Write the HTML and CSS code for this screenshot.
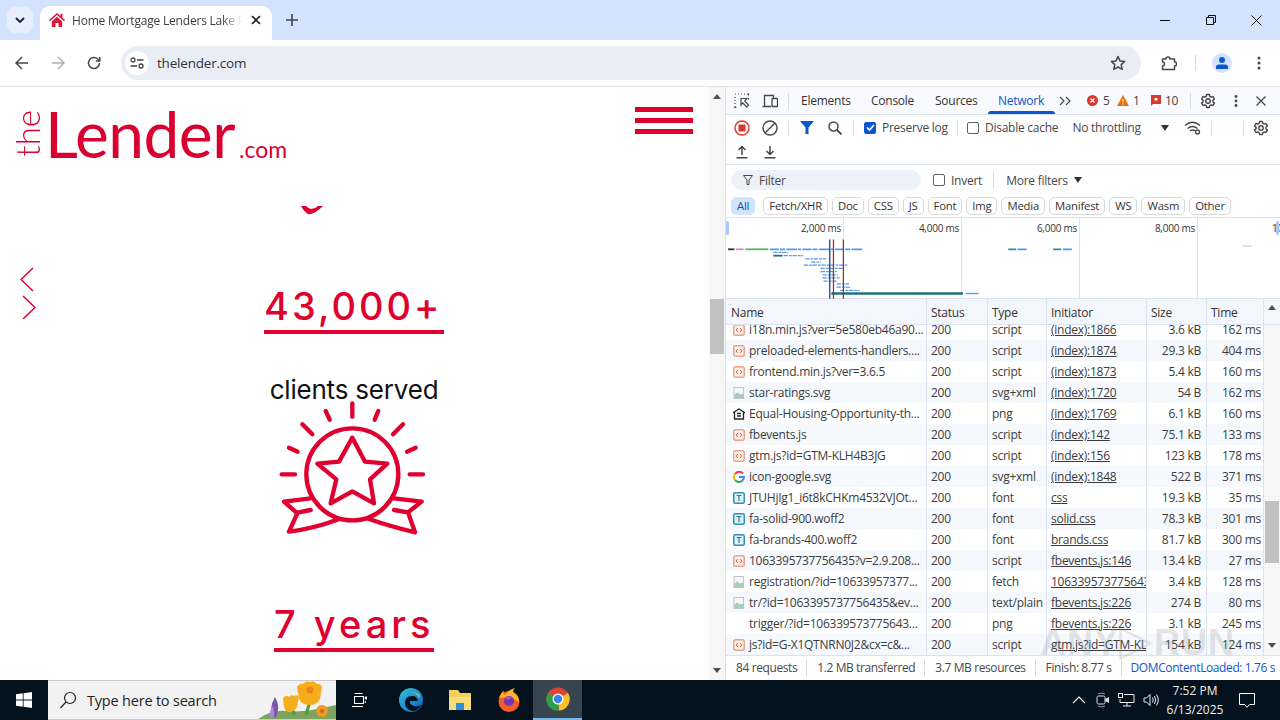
FILE: index.html
```html
<!DOCTYPE html>
<html lang="en">
<head>
<meta charset="utf-8">
<title>Home Mortgage Lenders</title>
<link rel="stylesheet" href="styles.css">
</head>
<body>
<svg class="defs" width="0" height="0" aria-hidden="true">
  <symbol id="i-script" viewBox="0 0 12 12"><rect x=".75" y=".75" width="10.5" height="10.5" rx="2" fill="#fdeee8" stroke="#e8a58c" stroke-width="1.5"/><path d="M4.8 4 3.2 6l1.600 2M7.200 4l1.600 2-1.600 2" fill="none" stroke="#d9623a" stroke-width="1"/></symbol>
  <symbol id="i-img" viewBox="0 0 12 13"><rect x=".5" y=".5" width="10.5" height="12" fill="#f4f6f9" stroke="#b9c2cc"/><path d="M1 12 1 8l3-2 3 2 4-1v5z" fill="#a9cdb4"/></symbol>
  <symbol id="i-font" viewBox="0 0 12 12"><rect x=".75" y=".75" width="10.5" height="10.5" rx="1.5" fill="#e3f1f8" stroke="#2f8fb8" stroke-width="1.5"/><path d="M3.500 3.500h5M6 3.500v5.500" fill="none" stroke="#1f7fa8" stroke-width="1.200"/></symbol>
  <symbol id="i-gear" viewBox="0 0 16 16"><path d="M6.600 1.500h2.800l.4 1.900 1.300.7 1.900-.6 1.400 2.400-1.500 1.300v1.600l1.500 1.300-1.400 2.400-1.900-.6-1.300.7-.4 1.900H6.600l-.4-1.900-1.300-.7-1.900.6-1.400-2.400 1.500-1.300V7.200L1.600 5.900 3 3.500l1.900.6 1.300-.7z" fill="none" stroke="#474747" stroke-width="1.400" stroke-linejoin="round"/><circle cx="8" cy="8" r="2.200" fill="none" stroke="#474747" stroke-width="1.400"/></symbol>
</svg>

<header class="tabstrip">
  <button class="tabsearch"><svg width="10" height="6" viewBox="0 0 10 6"><path d="M1 1l4 4 4-4" fill="none" stroke="#1f1f1f" stroke-width="1.800"/></svg></button>
  <div class="tab">
    <svg class="favicon" width="16" height="14" viewBox="0 0 16 14"><path d="M8 0 0 7l1 1.200L8 2l7 6.200L16 7l-2.500-2.200V1h-2v2zM2.800 8.500V14h3.700v-4h3v4h3.700V8.500L8 3.800z" fill="#d9183b"/></svg>
    <span class="tabtitle">Home Mortgage Lenders Lake Forest</span>
    <svg class="tabclose" width="10" height="10" viewBox="0 0 10 10"><path d="M1 1l8 8M9 1 1 9" stroke="#1f1f1f" stroke-width="1.600"/></svg>
  </div>
  <svg class="newtab" width="12" height="12" viewBox="0 0 12 12"><path d="M6 0v12M0 6h12" stroke="#444" stroke-width="1.600"/></svg>
  <div class="winctl">
    <svg width="10" height="10" viewBox="0 0 10 10"><path d="M0 5.500h10" stroke="#111" stroke-width="1"/></svg>
    <svg width="10" height="10" viewBox="0 0 10 10"><path d="M.5 2.500h7v7h-7zM2.500 2.500v-2h7v7h-2" fill="none" stroke="#111"/></svg>
    <svg width="11" height="11" viewBox="0 0 11 11"><path d="M.5.500l10 10M10.500.500l-10 10" stroke="#111"/></svg>
  </div>
</header>

<nav class="toolbar">
  <svg class="nav-i" width="14" height="14" viewBox="0 0 14 14"><path d="M13 7H1.500M7 1 1 7l6 6" fill="none" stroke="#474747" stroke-width="1.500"/></svg>
  <svg class="nav-i" width="14" height="14" viewBox="0 0 14 14"><path d="M1 7h11.500M7 1l6 6-6 6" fill="none" stroke="#b0b0b0" stroke-width="1.500"/></svg>
  <svg class="nav-i" width="14" height="14" viewBox="0 0 14 14"><path d="M12.500 7A5.500 5.500 0 1 1 10.800 3L12.500 4.500M12.800 1v4h-4" fill="none" stroke="#474747" stroke-width="1.500"/></svg>
  <div class="omnibox">
    <span class="siteinfo"><svg width="14" height="12" viewBox="0 0 14 12"><circle cx="3" cy="3" r="2" fill="none" stroke="#444" stroke-width="1.300"/><path d="M7 3h6.500M.5 9H7" stroke="#444" stroke-width="1.300"/><circle cx="11" cy="9" r="2" fill="none" stroke="#444" stroke-width="1.300"/></svg></span>
    <span class="url">thelender.com</span>
    <svg class="star" width="16" height="16" viewBox="0 0 16 16"><path d="M8 1.500l2 4.400 4.700.5-3.500 3.200 1 4.700L8 12l-4.200 2.300 1-4.700L1.300 6.400 6 5.900z" fill="none" stroke="#474747" stroke-width="1.500" stroke-linejoin="round"/></svg>
  </div>
  <svg class="ext" width="16" height="16" viewBox="0 0 16 16"><path d="M1 4h3.500a2 2 0 0 1 4 0H13v3a2 2 0 0 1 0 4v3.500H1V11a2 2 0 0 0 0-4z" transform="translate(.5 0)" fill="none" stroke="#474747" stroke-width="1.500" stroke-linejoin="round"/></svg>
  <span class="vsep"></span>
  <span class="avatar"><svg width="14" height="12" viewBox="0 0 14 12"><circle cx="7" cy="3" r="3" fill="#0b57d0"/><path d="M1 12V10q0-2.500 3-2.500h6q3 0 3 2.500v2z" fill="#0b57d0"/></svg></span>
  <svg class="dots" width="4" height="14" viewBox="0 0 4 14"><circle cx="2" cy="2" r="1.500" fill="#474747"/><circle cx="2" cy="7" r="1.500" fill="#474747"/><circle cx="2" cy="12" r="1.500" fill="#474747"/></svg>
</nav>

<main class="workspace">
  <section class="page">
    <div class="site-head">
      <div class="logo">
        <span class="logo-the">the</span>
        <span class="logo-name">Lender</span>
        <span class="logo-com">.com</span>
      </div>
      <div class="burger"><span></span><span></span><span></span></div>
    </div>
    <svg class="tick" width="22" height="9" viewBox="0 0 22 9"><path d="M0 0h5q3 3 5 3 4 0 7-3h5q-7 7-14 8.500Q3 6 0 0z" fill="#df0030"/></svg>
    <div class="stats">
      <div class="stat-num">43,000+</div>
      <div class="stat-label">clients served</div>
      <svg class="medal" width="190" height="150" viewBox="0 0 570 450" fill="none" stroke="#df0030" stroke-width="13" stroke-linecap="round" stroke-linejoin="round">
        <path d="M280 25v40M200 48l12 26M130 88l30 30M90 158l26 12M68 238h40M358 48l-11 26M432 88l-30 30M470 158l-26 12M492 238h-40"/>
        <circle cx="280" cy="238" r="138"/>
        <path d="M280 128l38 72 67 6-52 47 12 72-65-36-65 36 17-72-57-47 65-6z"/>
        <path d="M155 310l-80 10 40 35-25 55q75-10 145-36M118 352l37-7M405 310l83 10-41 32 21 60q-75-18-138-40M405 345l42 7"/>
      </svg>
      <div class="stat-num stat-years">7 years</div>
    </div>
    <svg class="arrows" width="16" height="52" viewBox="0 0 16 52"><path d="M13 1 1 12.500 13 24M3 29l12 11.500L3 52" fill="none" stroke="#df0030" stroke-width="1.500"/></svg>
  </section>

  <aside class="pagebar">
    <i class="arr-up"></i>
    <span class="pagethumb"></span>
    <i class="arr-down"></i>
  </aside>

  <section class="devtools">
    <div class="dt-tabs">
      <svg class="ic first" width="16" height="16" viewBox="0 0 16 16"><path d="M1 1h1M4 1h1M7 1h1M10 1h1M13 1h1.500v1.500M1 4v1M1 7v1M1 10v1M1 13v1.500h1.500M14.500 5v1.500" stroke="#474747" stroke-width="1.200" fill="none"/><path d="M7 5.500h6l-2.300 2.400L14.500 12l-1.800 2-4-4.200L7 12z" fill="none" stroke="#474747" stroke-width="1.200"/></svg>
      <svg class="ic second" width="16" height="14" viewBox="0 0 16 14"><path d="M9 12.500H.5M2.500 12V1.500h9V4" fill="none" stroke="#474747" stroke-width="1.300"/><rect x="10" y="4.500" width="5.500" height="8" rx=".5" fill="none" stroke="#474747" stroke-width="1.300"/></svg>
      <span class="dt-sep"></span>
      <span class="dt-tab t1">Elements</span>
      <span class="dt-tab t2">Console</span>
      <span class="dt-tab t3">Sources</span>
      <span class="dt-tab dt-active">Network</span>
      <svg class="chev" width="12" height="10" viewBox="0 0 12 10"><path d="M1 1l4 4-4 4M7 1l4 4-4 4" fill="none" stroke="#474747" stroke-width="1.200"/></svg>
      <span class="badge b-err"><svg width="11" height="11" viewBox="0 0 11 11"><circle cx="5.500" cy="5.500" r="5.500" fill="#dc362e"/><path d="M3.500 3.500l4 4M7.500 3.500l-4 4" stroke="#fff" stroke-width="1.200"/></svg>5</span>
      <span class="badge b-warn"><svg width="12" height="11" viewBox="0 0 12 11"><path d="M6 0l6 11H0z" fill="#e8710a"/><path d="M6 4v3.500M6 8.500v1" stroke="#fff"/></svg>1</span>
      <span class="badge b-flag"><svg width="10" height="11" viewBox="0 0 10 11"><path d="M0 0h10v9H0z" fill="#dc362e"/><path d="M0 9v2l2-2z" fill="#dc362e"/><path d="M3.500 3h3v2.500h-3z" fill="#fff"/></svg>10</span>
      <span class="dt-sep s2"></span>
      <svg class="ic g1" width="16" height="16"><use href="#i-gear"/></svg>
      <svg class="ic g2" width="4" height="12" viewBox="0 0 4 12"><circle cx="2" cy="1.500" r="1.400" fill="#474747"/><circle cx="2" cy="6" r="1.400" fill="#474747"/><circle cx="2" cy="10.500" r="1.400" fill="#474747"/></svg>
      <svg class="ic g3" width="10" height="10" viewBox="0 0 10 10"><path d="M.5.500l9 9M9.500.500l-9 9" stroke="#474747" stroke-width="1.300"/></svg>
    </div>

    <div class="dt-bar">
      <span class="btn"><svg width="16" height="16" viewBox="0 0 16 16"><circle cx="8" cy="8" r="7" fill="none" stroke="#dc362e" stroke-width="1.400"/><rect x="4.500" y="4.500" width="7" height="7" rx="1" fill="#dc362e"/></svg></span>
      <span class="btn"><svg width="16" height="16" viewBox="0 0 16 16"><circle cx="8" cy="8" r="7" fill="none" stroke="#474747" stroke-width="1.400"/><path d="M3 13 13 3" stroke="#474747" stroke-width="1.400"/></svg></span>
      <span class="bar-sep"></span>
      <span class="btn"><svg width="14" height="13" viewBox="0 0 14 13"><path d="M0 0h14L8.500 6.500V13h-3V6.500z" fill="#0b57d0"/></svg></span>
      <span class="btn"><svg width="14" height="14" viewBox="0 0 14 14"><circle cx="5.500" cy="5.500" r="4.500" fill="none" stroke="#474747" stroke-width="1.500"/><path d="M9 9l4.500 4.500" stroke="#474747" stroke-width="1.800"/></svg></span>
      <span class="bar-sep"></span>
      <span class="check on"><svg width="11" height="11" viewBox="0 0 11 11"><path d="M2 5.500l2.500 2.500L9 3" fill="none" stroke="#fff" stroke-width="1.600"/></svg></span>
      <span class="lbl pres">Preserve log</span>
      <span class="bar-sep s3"></span>
      <span class="check"></span>
      <span class="lbl">Disable cache</span>
      <span class="lbl throttle">No throttling</span>
      <i class="caret"></i>
      <svg class="wifi" width="18" height="14" viewBox="0 0 18 14"><path d="M1 4.500q7.500-6.500 15 0M3.500 7.500q5-4 10 0M6 10q2.500-2 5 0" fill="none" stroke="#474747" stroke-width="1.300"/><circle cx="13.500" cy="11" r="2" fill="none" stroke="#474747" stroke-width="1.300"/></svg>
      <span class="bar-sep s4"></span>
      <span class="bar-sep s5"></span>
      <svg class="gear-r" width="16" height="16"><use href="#i-gear"/></svg>
    </div>

    <div class="dt-bar2">
      <span class="btn"><svg width="14" height="14" viewBox="0 0 14 14"><path d="M7 10V1.500M3.500 5 7 1.500 10.500 5M1.500 12.800h11" fill="none" stroke="#474747" stroke-width="1.500"/></svg></span>
      <span class="btn"><svg width="14" height="14" viewBox="0 0 14 14"><path d="M7 1v8.500M3.500 6 7 9.500 10.500 6M1.500 12.800h11" fill="none" stroke="#474747" stroke-width="1.500"/></svg></span>
    </div>

    <div class="dt-filter">
      <div class="filter-input"><svg width="10" height="10" viewBox="0 0 10 10"><path d="M.5.500h9L6 5v4.500H4V5z" fill="none" stroke="#474747" stroke-width="1"/></svg><span>Filter</span></div>
      <span class="check c-inv"></span>
      <span class="lbl">Invert</span>
      <span class="bar-sep s6"></span>
      <span class="lbl">More filters</span>
      <i class="caret c2"></i>
    </div>

    <div class="dt-chips">
      <span class="chip sel">All</span>
      <span class="chip">Fetch/XHR</span>
      <span class="chip">Doc</span>
      <span class="chip">CSS</span>
      <span class="chip">JS</span>
      <span class="chip">Font</span>
      <span class="chip">Img</span>
      <span class="chip">Media</span>
      <span class="chip">Manifest</span>
      <span class="chip">WS</span>
      <span class="chip">Wasm</span>
      <span class="chip">Other</span>
    </div>

    <div class="overview">
      <span class="handle h-l"></span>
      <span class="handle h-r"></span>
      <span class="tick-lbl">2,000 ms</span>
      <span class="tick-lbl">4,000 ms</span>
      <span class="tick-lbl">6,000 ms</span>
      <span class="tick-lbl">8,000 ms</span>
      <span class="tick-lbl last">10,000 ms</span>
      <svg class="waterfall" width="554" height="81" viewBox="2.800 8.500 1565 229" fill="none">
        <g stroke-width="5">
          <path d="M8 97h18" stroke="#27313a"/><path d="M30 97h22" stroke="#d884cc"/><path d="M57 97h65" stroke="#54b45c"/>
          <path d="M126 97h264" stroke="#5b97e6" stroke-dasharray="26 3 14 4 30 3 9 3"/>
          <path d="M800 97h22M927 97h23" stroke="#24968e"/><path d="M826 97h26M955 97h25" stroke="#5b97e6"/>
          <path d="M1462 88h26" stroke="#ddd"/>
          <path d="M136 115h26" stroke="#1e6f70"/>
        </g>
        <g stroke="#5b97e6" stroke-width="3.500" stroke-dasharray="12 3 8 2">
          <path d="M136 106h42M165 115h55M226 124h59M243 133h27M222 142h123M270 151h65M270 160h45M275 169h43M275 178h50M278 187h40M315 195h35M315 204h40M325 213h55"/>
        </g>
        <path d="M300 222h372" stroke="#1e7078" stroke-width="7"/>
        <path d="M680 222h36" stroke="#5b97e6" stroke-width="4"/>
        <path d="M295.500 69v168" stroke="#0b3d91" stroke-width="3.500"/>
        <path d="M306 69v168M334 69v168" stroke="#b3261e" stroke-width="3.500"/>
      </svg>
    </div>

    <div class="net-head">
      <span>Name</span><span>Status</span><span>Type</span><span>Initiator</span><span>Size</span><span>Time</span>
      <i class="arr-up small"></i>
    </div>

    <div class="net-body">
      <div class="rows">
        <div class="row"><span class="name"><svg><use href="#i-script"/></svg>i18n.min.js?ver=5e580eb46a90...</span><span>200</span><span>script</span><span class="init">(index):1866</span><span class="r">3.6 kB</span><span class="r">162 ms</span></div>
        <div class="row"><span class="name"><svg><use href="#i-script"/></svg>preloaded-elements-handlers....</span><span>200</span><span>script</span><span class="init">(index):1874</span><span class="r">29.3 kB</span><span class="r">404 ms</span></div>
        <div class="row"><span class="name"><svg><use href="#i-script"/></svg>frontend.min.js?ver=3.6.5</span><span>200</span><span>script</span><span class="init">(index):1873</span><span class="r">5.4 kB</span><span class="r">160 ms</span></div>
        <div class="row"><span class="name"><svg><use href="#i-img"/></svg>star-ratings.svg</span><span>200</span><span>svg+xml</span><span class="init">(index):1720</span><span class="r">54 B</span><span class="r">162 ms</span></div>
        <div class="row"><span class="name"><svg viewBox="0 0 12 12"><path d="M6 1 .5 4.500h1V11h9V4.500h1z" fill="none" stroke="#222" stroke-width="1.300"/><path d="M4 5.500h4M4 8h4" stroke="#222" stroke-width="1.300"/></svg>Equal-Housing-Opportunity-th...</span><span>200</span><span>png</span><span class="init">(index):1769</span><span class="r">6.1 kB</span><span class="r">160 ms</span></div>
        <div class="row"><span class="name"><svg><use href="#i-script"/></svg>fbevents.js</span><span>200</span><span>script</span><span class="init">(index):142</span><span class="r">75.1 kB</span><span class="r">133 ms</span></div>
        <div class="row"><span class="name"><svg><use href="#i-script"/></svg>gtm.js?id=GTM-KLH4B3JG</span><span>200</span><span>script</span><span class="init">(index):156</span><span class="r">123 kB</span><span class="r">178 ms</span></div>
        <div class="row"><span class="name"><svg viewBox="0 0 12 12" fill="none" stroke-width="2"><path d="M10 2.500A5 5 0 0 0 2 3" stroke="#ea4335"/><path d="M2 3a5 5 0 0 0 0 6" stroke="#fbbc05"/><path d="M2 9a5 5 0 0 0 7.500.500" stroke="#34a853"/><path d="M9.500 9.500A5 5 0 0 0 11 6H6" stroke="#4285f4"/></svg>icon-google.svg</span><span>200</span><span>svg+xml</span><span class="init">(index):1848</span><span class="r">522 B</span><span class="r">371 ms</span></div>
        <div class="row"><span class="name"><svg><use href="#i-font"/></svg>JTUHjIg1_i6t8kCHKm4532VJOt...</span><span>200</span><span>font</span><span class="init">css</span><span class="r">19.3 kB</span><span class="r">35 ms</span></div>
        <div class="row"><span class="name"><svg><use href="#i-font"/></svg>fa-solid-900.woff2</span><span>200</span><span>font</span><span class="init">solid.css</span><span class="r">78.3 kB</span><span class="r">301 ms</span></div>
        <div class="row"><span class="name"><svg><use href="#i-font"/></svg>fa-brands-400.woff2</span><span>200</span><span>font</span><span class="init">brands.css</span><span class="r">81.7 kB</span><span class="r">300 ms</span></div>
        <div class="row"><span class="name"><svg><use href="#i-script"/></svg>1063395737756435?v=2.9.208...</span><span>200</span><span>script</span><span class="init">fbevents.js:146</span><span class="r">13.4 kB</span><span class="r">27 ms</span></div>
        <div class="row"><span class="name"><svg><use href="#i-img"/></svg>registration/?id=10633957377...</span><span>200</span><span>fetch</span><span class="init">1063395737756435</span><span class="r">3.4 kB</span><span class="r">128 ms</span></div>
        <div class="row"><span class="name"><svg><use href="#i-img"/></svg>tr/?id=1063395737756435&amp;ev...</span><span>200</span><span>text/plain</span><span class="init">fbevents.js:226</span><span class="r">274 B</span><span class="r">80 ms</span></div>
        <div class="row"><span class="name"><svg></svg>trigger/?id=106339573775643...</span><span>200</span><span>png</span><span class="init">fbevents.js:226</span><span class="r">3.1 kB</span><span class="r">245 ms</span></div>
        <div class="row"><span class="name"><svg><use href="#i-script"/></svg>js?id=G-X1QTNRN0J2&amp;cx=c&amp;...</span><span>200</span><span>script</span><span class="init">gtm.js?id=GTM-KLH4B3JG</span><span class="r">154 kB</span><span class="r">124 ms</span></div>
      </div>
      <div class="net-scroll"><i class="arr-down small"></i><span class="net-thumb"></span></div>
    </div>

    <div class="net-foot">
      <span>84 requests</span><span>1.2 MB transferred</span><span>3.7 MB resources</span><span>Finish: 8.77 s</span><span class="dcl">DOMContentLoaded: 1.76 s</span>
    </div>
    <div class="watermark">ANY<b>▷</b>RUN</div>
  </section>
</main>

<footer class="taskbar">
  <svg class="start" width="16" height="16" viewBox="0 0 16 16"><path d="M0 2.300 6.800 1.300v6.300H0zM7.600 1.200 16 0v7.600H7.600zM0 8.400h6.800v6.300L0 13.700zM7.600 8.400H16V16l-8.400-1.200z" fill="#fff"/></svg>
  <div class="search">
    <svg width="18" height="18" viewBox="0 0 18 18"><circle cx="11" cy="7" r="5.500" fill="none" stroke="#222" stroke-width="1.200"/><path d="M7 11 1.500 17" stroke="#222" stroke-width="1.200"/></svg>
    <span>Type here to search</span>
    <svg class="flowers" width="78" height="38" viewBox="0 0 78 38">
      <path d="M0 38q14-10 30-8 16 2 48-6v14z" fill="#7da35f"/>
      <path d="M37 34 33 26M48 34l4-14" stroke="#4f9a3c" stroke-width="3"/>
      <path d="M16 36q-6-8 1-20 6 10 1 20z" fill="#7a58a8"/><path d="M12 36q-1-6 3-11 2 5 1 11z" fill="#a58ad0"/>
      <path d="M25 17q3-4 6-1 2-3 5-1 3-2 5 1l-2 10q-3 5-7 5-5 0-6-5z" fill="#f5b11d"/>
      <path d="M39 6q3-5 6-3 3-4 7-2 4-2 7 2 3-1 5 3l-2 12q-3 6-10 6-8 0-11-6z" fill="#f6ad1c"/>
      <circle cx="52" cy="9" r="3.500" fill="#e8861b"/>
      <circle cx="64" cy="30" r="6" fill="#ee9a24"/><circle cx="64" cy="30" r="2" fill="#c9661a"/>
    </svg>
  </div>
  <svg class="taskview" width="16" height="16" viewBox="0 0 16 16"><path d="M3.500 1.500h8M3.500 4.500h9v7h-9zM1 14.500h11" fill="none" stroke="#fff" stroke-width="1.100"/><path d="M14.300 5h1.700v2h-1.700zM14.300 9v2" stroke="#fff" fill="#fff"/></svg>
  <span class="appicon"><svg width="24" height="24" viewBox="0 0 24 24"><defs><linearGradient id="edge" x1="0" y1="0" x2="1" y2="1"><stop offset="0" stop-color="#36c3d0"/><stop offset=".6" stop-color="#1d84d6"/><stop offset="1" stop-color="#0e5fa8"/></linearGradient></defs><circle cx="12" cy="12" r="12" fill="url(#edge)"/><path d="M6 15q0-7 7-7 5 0 6 5h-8q-1 4 4 5 3 1 7-1-3 6-9 6-7-2-7-8z" fill="#03121f"/><path d="M20 10q-3-6-8-5 6-2 9 3z" fill="#73d96c"/></svg></span>
  <span class="appicon"><svg width="24" height="22" viewBox="0 0 24 22"><path d="M1 1h9l2 3h11v17H1z" fill="#f4cf5b"/><path d="M1 8h22v13H1z" fill="#f9dd7a"/><rect x="8" y="14" width="8" height="7" fill="#2a8fd8"/></svg></span>
  <span class="appicon"><svg width="24" height="24" viewBox="0 0 24 24"><circle cx="12" cy="13.500" r="10.500" fill="#f25c2b"/><path d="M2 10q2-6 5-7-1 3 1 4 3-5 10-7-3 3-1 5 5 3 5 9L12 9z" fill="#ffb526"/><circle cx="12" cy="13" r="5" fill="#6d38b8"/><path d="M8 10q4-3 7 0-3 0-4 2z" fill="#d74db0"/></svg></span>
  <span class="appicon running"><svg width="24" height="24" viewBox="0 0 24 24"><circle cx="12" cy="12" r="11.500" fill="#db4437"/><path d="M12 12 22 6a11.500 11.500 0 0 1-9 17.500z" fill="#fbc02d"/><path d="M12 12 13 23.500A11.500 11.500 0 0 1 2 6z" fill="#2f9e44"/><circle cx="12" cy="12" r="5.500" fill="#fff"/><circle cx="12" cy="12" r="4.200" fill="#3b82f0"/></svg></span>
  <div class="tray">
    <svg class="caret-up" width="14" height="8" viewBox="0 0 14 8"><path d="M1 7l6-6 6 6" fill="none" stroke="#fff" stroke-width="1.100"/></svg>
    <svg width="14" height="18" viewBox="0 0 14 18"><rect x="1" y="5" width="8" height="8" rx="1.500" fill="none" stroke="#ddd"/><path d="M9 8l4-2v6l-4-2z" fill="#ddd"/><path d="M2 3q3-2 7 0M2 15q3 2 7 0" fill="none" stroke="#999"/></svg>
    <svg width="17" height="14" viewBox="0 0 17 14"><path d="M6 1.500h10v8H2V6M9 9.500V13M5 13h8" fill="none" stroke="#eee"/><rect x=".5" y=".5" width="4" height="4" fill="none" stroke="#eee"/></svg>
    <svg width="16" height="14" viewBox="0 0 16 14"><path d="M1 5h2.500L7 1.500v11L3.500 9H1zM9.500 4.500q1.500 2.500 0 5M11.500 3q2.500 4 0 8M13.500 1.500q3.500 5.500 0 11" fill="none" stroke="#eee"/></svg>
    <div class="clock"><span>7:52 PM</span><span>6/13/2025</span></div>
    <svg class="notif" width="16" height="15" viewBox="0 0 16 15"><path d="M.5.500h15v11h-5L8 14.300 5.500 11.500h-5z" fill="none" stroke="#fff"/></svg>
  </div>
</footer>
</body>
</html>
```

FILE: styles.css
```css
* { box-sizing: border-box; }
html, body { margin: 0; padding: 0; }
body {
  width: 1280px; height: 720px; overflow: hidden;
  display: flex; flex-direction: column;
  font-family: "Open Sans", "Noto Sans", sans-serif;
  background: #fff; color: #1f1f1f;
}
.defs { position: absolute; }
i { display: block; flex: none; }
svg { flex: none; }

/* Tab strip */
.tabstrip { height: 40px; background: #d3e3fd; display: flex; align-items: flex-end; flex: none; }
.tabsearch {
  width: 26px; height: 26px; margin: 0 7px 7px 7px; border: 0; border-radius: 8px;
  background: #e6eefb; display: flex; align-items: center; justify-content: center; padding: 0;
}
.tab {
  width: 232px; height: 34px; background: #fff; border-radius: 10px 10px 0 0;
  display: flex; align-items: center; padding: 0 10px 6px 8px;
}
.favicon { margin-left: 1px; }
.tabtitle {
  font-size: 12px; color: #3c3c3c; margin-left: 7px; width: 170px; white-space: nowrap; overflow: hidden;
  letter-spacing: -.2px;
  -webkit-mask-image: linear-gradient(90deg, #000 88%, transparent 100%);
  mask-image: linear-gradient(90deg, #000 88%, transparent 100%);
}
.tabclose { margin-left: 9px; }
.newtab { margin: 0 0 14px 14px; }
.winctl { margin-left: auto; width: 120px; height: 40px; display: flex; align-items: center; justify-content: space-between; padding: 0 18px 0 0; }

/* Toolbar */
.toolbar {
  height: 47px; flex: none; background: #fff; border-bottom: 1px solid #e0e0e0;
  border-radius: 10px 10px 0 0;
  display: flex; align-items: center; padding: 0 0 1px 15px;
}
.nav-i { margin-right: 22px; }
.omnibox {
  width: 1020px; height: 34px; margin-left: -2px; background: #e9eef6; border-radius: 17px;
  display: flex; align-items: center; padding: 0 15px 0 4px; flex: none;
}
.siteinfo { width: 24px; height: 24px; border-radius: 50%; background: #fff; display: flex; align-items: center; justify-content: center; flex: none; }
.url { font-size: 13.500px; letter-spacing: -.2px; color: #333; margin-left: 8px; }
.star { margin-left: auto; }
.ext { margin-left: 20px; }
.vsep { width: 1px; height: 16px; background: #d5d5d5; margin-left: 18px; flex: none; }
.avatar { width: 20px; height: 20px; border-radius: 50%; background: #d3e3fd; margin-left: 16px; display: flex; align-items: center; justify-content: center; flex: none; }
.dots { margin-left: 25px; }

/* Main split */
.workspace { flex: 1; min-height: 0; display: flex; }
.page { width: 709px; flex: none; position: relative; overflow: hidden; background: #fff; }
.site-head { height: 118px; display: flex; justify-content: space-between; align-items: flex-start; padding: 0 16px 0 14px; }
.logo { display: flex; align-items: baseline; color: #d9002f; font-family: "Lato", sans-serif; height: 78px; padding-top: 15px; }
.logo-the { writing-mode: vertical-rl; transform: rotate(180deg); font-size: 33px; font-weight: 300; line-height: 26px; align-self: flex-end; margin-bottom: 8px; }
.logo-name { font-size: 64px; font-weight: 400; line-height: 64px; margin-left: 5px; letter-spacing: -.5px; }
.logo-com { font-size: 23px; font-weight: 400; margin-left: 4px; }
.burger { width: 58px; margin-top: 20px; display: flex; flex-direction: column; gap: 6px; }
.burger span { height: 5px; background: #df0030; }
.tick { display: block; margin: 1px 0 0 301px; }
.stats { display: flex; flex-direction: column; align-items: center; width: 708px; margin-top: 71px; }
.stat-num {
  width: 180px; height: 48px; border-bottom: 4px solid #df0030; color: #df0030;
  font-family: "Inter", sans-serif; font-size: 38px; font-weight: 500; line-height: 40px; letter-spacing: 3px; white-space: nowrap;
  text-align: left;
}
.stat-years { width: 160px; margin-top: 59px; letter-spacing: 4px; }
.stat-label { font-family: "Inter", sans-serif; font-size: 26px; line-height: 32px; color: #111; margin-top: 40px; letter-spacing: -.2px; }
.medal { display: block; margin-top: -11px; }
.arrows { position: absolute; left: 20px; top: 180px; }

/* Page scrollbar */
.pagebar { width: 17px; flex: none; background: #f6f6f6; position: relative; border-right: 1px solid #d6dfee; display: flex; flex-direction: column; align-items: center; }
.arr-up { width: 0; height: 0; border: 4.500px solid transparent; border-top: 0; border-bottom: 5px solid #505050; margin-top: 7px; }
.arr-down { width: 0; height: 0; border: 4.500px solid transparent; border-bottom: 0; border-top: 5px solid #505050; position: absolute; bottom: 7px; }
.pagethumb { width: 14px; height: 55px; background: #c1c1c1; margin-top: 200px; }

/* DevTools */
.devtools { flex: 1; min-width: 0; display: flex; flex-direction: column; position: relative; background: #fff; font-size: 12px; color: #474747; letter-spacing: -.25px; }
.dt-tabs { height: 28px; flex: none; display: flex; align-items: center; border-bottom: 1px solid #dbe3f0; background: #f8fafe; position: relative; }
.first { margin-left: 8px; }
.second { margin-left: 12px; }
.dt-sep { width: 1px; height: 16px; background: #dcdcdc; margin-left: 10px; flex: none; }
.dt-tab { font-size: 12px; color: #333; line-height: 27px; white-space: nowrap; }
.t1 { margin-left: 12px; width: 49px; }
.t2 { margin-left: 21px; width: 44px; }
.t3 { margin-left: 20px; width: 42px; }
.dt-active { color: #0b57d0; margin-left: 11px; padding: 0 10px; position: relative; width: 67px; flex: none; }
.dt-active::after { content: ""; position: absolute; left: 0; right: 0; bottom: 0; height: 3px; background: #0b57d0; border-radius: 3px 3px 0 0; }
.chev { margin-left: 4px; }
.badge { display: flex; align-items: center; gap: 5px; color: #474747; flex: none; }
.b-err { margin-left: 16px; width: 23px; }
.b-warn { margin-left: 7px; width: 23px; gap: 4px; }
.b-flag { margin-left: 11px; width: 28px; gap: 4px; }
.s2 { margin-left: 11px; }
.g1 { margin-left: 9px; }
.g2 { margin-left: 18px; }
.g3 { margin-left: 18px; }

.dt-bar { height: 25px; flex: none; display: flex; align-items: center; padding-left: 2px; }
.dt-bar2 { height: 25px; flex: none; display: flex; align-items: center; padding-left: 2px; border-bottom: 1px solid #dbe3f0; }
.btn { width: 28px; height: 24px; display: flex; align-items: center; justify-content: center; flex: none; }
.bar-sep { width: 1px; height: 16px; background: #dcdcdc; margin: 0 4px; flex: none; }
.check { width: 12px; height: 12px; border: 1px solid #5f5f5f; border-radius: 2px; background: #fff; margin-left: 6px; flex: none; display: flex; align-items: center; justify-content: center; }
.check.on { background: #0b57d0; border-color: #0b57d0; margin-left: 6px; }
.lbl { margin-left: 6px; white-space: nowrap; flex: none; }
.pres { width: 66px; }
.s3 { margin-left: 9px; margin-right: 3px; }
.throttle { margin-left: 14px; width: 69px; }
.caret { width: 0; height: 0; border: 4px solid transparent; border-bottom: 0; border-top: 6px solid #333; margin-left: 20px; }
.wifi { margin-left: 15px; }
.s4 { margin-left: 9px; margin-right: 0; }
.s5 { margin-left: 31px; margin-right: 0; }
.gear-r { margin-left: 9px; }

.dt-filter { height: 29px; flex: none; display: flex; align-items: center; padding: 1px 0 0 5px; }
.filter-input { width: 190px; height: 20px; border-radius: 10px; background: #edf2fa; display: flex; align-items: center; padding-left: 12px; gap: 6px; flex: none; }
.c-inv { margin-left: 12px; }
.s6 { margin-left: 11px; margin-right: 6px; }
.c2 { margin-left: 6px; }

.dt-chips { height: 24px; flex: none; display: flex; align-items: center; gap: 4px; padding-left: 5px; border-bottom: 1px solid #dbe3f0; letter-spacing: -.2px; }
.chip { height: 18px; line-height: 16px; border: 1px solid #d9d9d9; border-radius: 5px; padding: 0 5px; font-size: 11.300px; color: #333; white-space: nowrap; flex: none; }
.chip.sel { background: #d3e3fd; border-color: #d3e3fd; color: #0b4fb8; margin-right: 4px; }

.overview { height: 81px; flex: none; position: relative; display: flex; border-bottom: 1px solid #dbe3f0; }
.handle { position: absolute; top: 3px; width: 3px; height: 14px; background: #a8c7fa; border-radius: 2px; }
.h-l { left: 0; }
.h-r { right: 1px; }
.tick-lbl { width: 118px; height: 100%; border-right: 1px solid #dbe3f0; text-align: right; padding: 3px 2px 0 0; font-size: 10px; color: #333; white-space: nowrap; flex: none; }
.tick-lbl.last { width: 83px; border: 0; text-align: left; padding-left: 74px; overflow: hidden; }
.waterfall { position: absolute; left: 0; top: 0; }

.net-head {
  height: 26px; flex: none; display: grid; grid-template-columns: 201px 61px 59px 100px 60px 57px 16px;
  background: #f3f6fc; border-bottom: 1px solid #dbe3f0; align-items: center; position: relative;
}
.net-head span { padding: 2px 0 0 4px; line-height: 23px; border-right: 1px solid #dbe3f0; color: #333; }
.net-head span:first-child { padding-left: 5px; }
.arr-up.small { margin: 0 auto 8px; }
.net-body { flex: 1; min-height: 0; position: relative; overflow: hidden; display: flex; }
.rows { width: 538px; margin-top: -6px; flex: none; }
.row { height: 21px; display: grid; grid-template-columns: 201px 61px 59px 100px 60px 57px; line-height: 21px; color: #3c3c3c; }
.row:nth-child(even) { background: #f5f8fd; }
.row > span { padding: 0 4px; border-right: 1px solid #dbe3f0; white-space: nowrap; overflow: hidden; }
.row > .name { display: flex; align-items: center; padding-left: 7px; }
.name svg { width: 12px; height: 12px; margin-right: 4px; }
.row > .init { text-decoration: underline; padding-right: 0; }
.row > .r { text-align: right; }
.row > .r:last-child { padding-right: 2px; }
.row > .r:nth-child(5) { padding-right: 5px; }
.net-scroll { flex: 1; position: relative; background: #f6f6f6; }
.net-thumb { position: absolute; left: 1px; width: 14px; height: 62px; top: 176px; background: #c1c1c1; }
.arr-down.small { left: 4px; }

.net-foot { height: 25px; flex: none; border-top: 1px solid #dbe3f0; display: flex; align-items: center; background: #fff; letter-spacing: -.4px; }
.net-foot span { padding: 0 9px 0 10px; border-right: 1px solid #dcdcdc; line-height: 16px; white-space: nowrap; flex: none; }
.net-foot .dcl { color: #0b57d0; border: 0; padding-left: 9px; padding-right: 0; }

.watermark { position: absolute; left: 314px; bottom: 19px; font-family: "Liberation Sans", sans-serif; font-size: 36px; line-height: 36px; color: rgba(120,120,120,.2); font-weight: 700; white-space: nowrap; letter-spacing: 1px; pointer-events: none; }
.watermark b { font-size: 44px; line-height: 36px; font-weight: 400; }

/* Taskbar */
.taskbar { height: 40px; flex: none; background: #04121e; display: flex; align-items: center; position: relative; }
.start { margin-left: 16px; }
.search { width: 288px; height: 40px; margin-left: 16px; background: #f2f2f2; border-top: 1px solid #ccc; border-bottom: 1px solid #ccc; display: flex; align-items: center; padding-left: 11px; position: relative; overflow: hidden; flex: none; }
.search span { font-size: 14.500px; letter-spacing: -.2px; color: #222; margin-left: 10px; }
.flowers { position: absolute; right: 0; bottom: 0; }
.taskview { margin-left: 15px; }
.appicon { width: 49px; height: 40px; display: flex; align-items: center; justify-content: center; flex: none; }
.taskview + .appicon { margin-left: 19px; }
.appicon.running { background: #36454f; border-bottom: 2px solid #76b9ed; }
.tray { margin-left: auto; display: flex; align-items: center; color: #eee; }
.tray > svg { margin-right: 8px; }
.tray > .caret-up { margin-right: 10px; }
.clock { display: flex; flex-direction: column; align-items: center; font-size: 12px; line-height: 19px; width: 56px; }
.tray > .notif { margin: 0 25px 0 16px; }
```
